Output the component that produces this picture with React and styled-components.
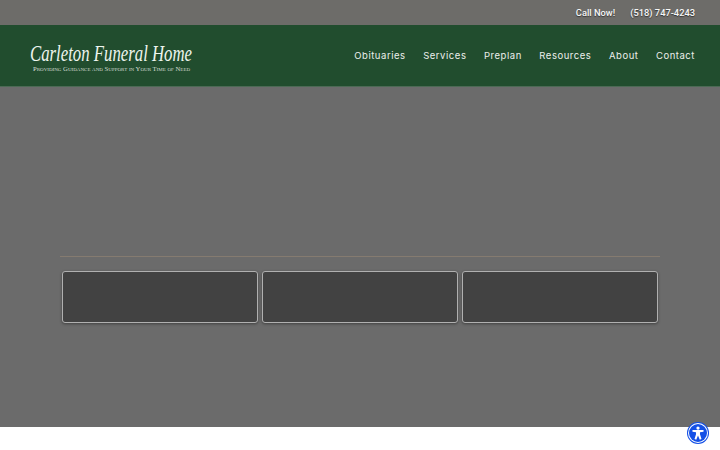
import styled, { createGlobalStyle } from "styled-components";

const Global = createGlobalStyle`
  html, body {
    margin: 0;
    padding: 0;
    background: #fff;
  }
  body {
    font-family: "Roboto", "Liberation Sans", sans-serif;
    overflow: hidden;
  }
`;

const Page = styled.div`
  height: 450px;
  display: flex;
  flex-direction: column;
`;

const TopBar = styled.div`
  height: 25px;
  background: #6d6c69;
  display: flex;
  align-items: center;
  justify-content: flex-end;
  gap: 15px;
  padding-right: 25px;
  box-sizing: border-box;
`;

const TopText = styled.span`
  font-family: "Roboto", sans-serif;
  font-size: 9.3px;
  font-weight: 500;
  color: #f6f6f6;
  text-shadow: 0 1px 1px rgba(0, 0, 0, 0.5);
`;

const Header = styled.header`
  height: 62px;
  background: #214d2e;
  border-bottom: 1px solid #4c6a55;
  box-sizing: border-box;
  display: flex;
  align-items: center;
  justify-content: space-between;
  padding: 0 25px 0 30px;
`;

const Logo = styled.div`
  display: flex;
  flex-direction: column;
  align-items: flex-start;
  margin-top: 4px;
`;

const LogoName = styled.div`
  font-family: "Liberation Serif", serif;
  font-style: italic;
  font-size: 22.5px;
  line-height: 21px;
  color: #eef5ee;
  white-space: nowrap;
  transform: scaleX(0.745);
  transform-origin: left center;
`;

const LogoTag = styled.div`
  font-family: "Liberation Serif", serif;
  font-variant: small-caps;
  font-size: 6.7px;
  line-height: 8px;
  margin-top: 1px;
  color: #d5ded5;
  margin-left: 3px;
  white-space: nowrap;
`;

const Nav = styled.nav`
  display: flex;
  gap: 17.5px;
`;

const NavLink = styled.a`
  font-family: "Inter", sans-serif;
  font-size: 9.5px;
  font-weight: 400;
  letter-spacing: 0.54px;
  color: #eceFec;
`;

const Hero = styled.main`
  height: 340px;
  background: #6b6b6b;
  display: flex;
  flex-direction: column;
  align-items: center;
  padding-top: 169px;
  box-sizing: border-box;
`;

const Divider = styled.div`
  width: 600px;
  height: 1px;
  background: #857b70;
`;

const Cards = styled.div`
  margin-top: 14px;
  width: 596px;
  display: flex;
  gap: 4px;
`;

const Card = styled.div`
  flex: 1;
  height: 52px;
  box-sizing: border-box;
  background: #424242;
  border: 1px solid #b0b0b0;
  border-radius: 3px;
  box-shadow: 0 1px 3px rgba(0, 0, 0, 0.4);
`;

const Access = styled.button`
  position: fixed;
  right: 13px;
  bottom: 8px;
  width: 18px;
  height: 18px;
  padding: 0;
  border-radius: 50%;
  border: none;
  box-shadow: 0 0 0 1px #fff, 0 0 0 2px #1450e6;
  background: #1450e6;
  display: flex;
  align-items: center;
  justify-content: center;
`;

function AccessIcon() {
  return (
    <svg width="14" height="14" viewBox="0 0 24 24" fill="#fff">
      <circle cx="12" cy="3.6" r="2.8" />
      <path d="M2.5 7 L21.5 7 L21.5 9.8 L15.4 10.8 L15.4 14 L18 22.4 L15 23.4 L12 16.4 L9 23.4 L6 22.4 L8.6 14 L8.6 10.8 L2.5 9.8 Z" />
    </svg>
  );
}

const navItems = ["Obituaries", "Services", "Preplan", "Resources", "About", "Contact"];

export default function App() {
  return (
    <Page>
      <Global />
      <TopBar>
        <TopText>Call Now!</TopText>
        <TopText>(518) 747-4243</TopText>
      </TopBar>
      <Header>
        <Logo>
          <LogoName>Carleton Funeral Home</LogoName>
          <LogoTag>Providing Guidance and Support in Your Time of Need</LogoTag>
        </Logo>
        <Nav>
          {navItems.map(item => <NavLink key={item}>{item}</NavLink>)}
        </Nav>
      </Header>
      <Hero>
        <Divider />
        <Cards>
          <Card />
          <Card />
          <Card />
        </Cards>
      </Hero>
      <Access aria-label="Accessibility"><AccessIcon /></Access>
    </Page>
  );
}
